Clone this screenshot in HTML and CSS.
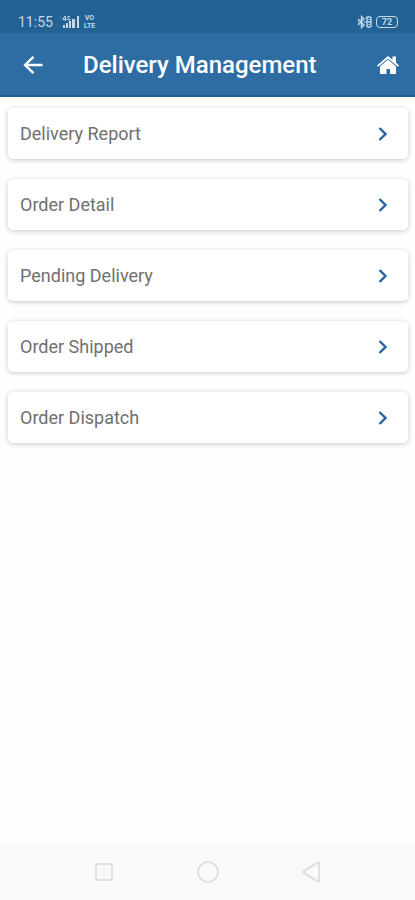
FILE: index.html
```
<!DOCTYPE html>
<html lang="en">
<head>
<meta charset="utf-8">
<meta name="viewport" content="width=device-width, initial-scale=1">
<title>Delivery Management</title>
<link rel="stylesheet" href="styles.css">
</head>
<body>
<div class="status-bar">
  <div class="status-group">
    <span class="time">11:55</span>
    <svg class="signal" width="23" height="14" viewBox="0 0 23 14" fill="currentColor" aria-hidden="true">
      <rect x="3" y="2" width="1" height="1" opacity=".5"/>
      <path d="M8 1L6 4.500H9.500M8.500 1V6M13 1.500H11V5H13V3.500" fill="none" stroke="currentColor" stroke-width="1"/>
      <rect x="6" y="10" width="2" height="3"/><rect x="9" y="8" width="2" height="5"/><rect x="12" y="6" width="2" height="7"/>
      <rect x="15" y="4" width="3" height="9"/><rect x="20" y="1" width="2" height="12"/>
    </svg>
    <span class="volte"><span>VO</span><span>LTE</span></span>
  </div>
  <div class="status-group">
    <svg width="15" height="14" viewBox="0 0 15 14" fill="none" stroke="currentColor" stroke-width="1.400" aria-hidden="true">
      <path d="M1 4L7 10L4.500 12.500V1.500L7 4L1 10"/>
      <path d="M1 7H2M7 7H8.500M9 2L10.500 3.500"/>
      <rect x="10" y="2" width="4" height="10" rx="1"/>
      <path d="M10 7H14M12 4V5M12 9V10"/>
    </svg>
    <span class="battery">72</span>
  </div>
</div>
<header class="app-bar">
  <button class="icon-button" type="button" aria-label="Back">
    <svg width="20" height="18" viewBox="0 0 20 18" fill="none" stroke="currentColor" stroke-width="2.400" aria-hidden="true"><path d="M19.500 9H2M10.500 .8L2 9L10.500 17.200"/></svg>
  </button>
  <h1>Delivery Management</h1>
  <a class="icon-button" href="#" aria-label="Home">
    <svg width="22" height="18" viewBox="0 0 22 18" fill="currentColor" aria-hidden="true">
      <path d="M11 3.600L19 10.400V17.200Q19 18 18.200 18H13V13H9.500V18H3.800Q3 18 3 17.200V10.400Z"/>
      <path d="M11 0L15.500 3.800V.5H19V6.700L22 9.400L20.900 10.700L11 2.600L1.100 10.700L0 9.400Z"/>
    </svg>
  </a>
</header>
<main>
  <nav class="menu" aria-label="Delivery">
    <a class="card" href="#"><span>Delivery Report</span><svg class="chevron" viewBox="0 0 10 14" aria-hidden="true"><path d="M1.500 1L7.500 7L1.500 13"/></svg></a>
    <a class="card" href="#"><span>Order Detail</span><svg class="chevron" viewBox="0 0 10 14" aria-hidden="true"><path d="M1.500 1L7.500 7L1.500 13"/></svg></a>
    <a class="card" href="#"><span>Pending Delivery</span><svg class="chevron" viewBox="0 0 10 14" aria-hidden="true"><path d="M1.500 1L7.500 7L1.500 13"/></svg></a>
    <a class="card" href="#"><span>Order Shipped</span><svg class="chevron" viewBox="0 0 10 14" aria-hidden="true"><path d="M1.500 1L7.500 7L1.500 13"/></svg></a>
    <a class="card" href="#"><span>Order Dispatch</span><svg class="chevron" viewBox="0 0 10 14" aria-hidden="true"><path d="M1.500 1L7.500 7L1.500 13"/></svg></a>
  </nav>
</main>
<footer class="system-nav">
  <button type="button" aria-label="Recent apps"><svg viewBox="0 0 22 22" aria-hidden="true"><rect x="3" y="3" width="16" height="16" rx="1"/></svg></button>
  <button type="button" aria-label="Home screen"><svg viewBox="0 0 22 22" aria-hidden="true"><circle cx="11" cy="11" r="10"/></svg></button>
  <button type="button" aria-label="System back"><svg viewBox="0 0 22 22" aria-hidden="true"><path d="M18 2V20Q18 21 17 20.500L3 12Q1.500 11 3 10L17 1.500Q18 1 18 2Z"/></svg></button>
</footer>
</body>
</html>
```
FILE: styles.css
```
* {
  box-sizing: border-box;
}

body {
  margin: 0;
  min-height: 100vh;
  display: flex;
  flex-direction: column;
  background: #fefefe;
  font-family: Roboto, "Liberation Sans", sans-serif;
}

button {
  padding: 0;
  border: 0;
  background: none;
  color: inherit;
}

.status-bar {
  display: flex;
  align-items: center;
  justify-content: space-between;
  height: 33px;
  padding: 10px 17px 0 18px;
  background: #226294;
  color: #c5d9e9;
}

.status-group {
  display: flex;
  align-items: center;
  gap: 4px;
}

.time {
  font-size: 14px;
  line-height: 16px;
}

.volte {
  display: flex;
  flex-direction: column;
  align-items: center;
  font-size: 7px;
  font-weight: 700;
  line-height: 8px;
}

.battery {
  width: 22px;
  height: 12px;
  border: 1px solid currentColor;
  border-radius: 4px;
  font-size: 9px;
  font-weight: 700;
  line-height: 10px;
  text-align: center;
}

.app-bar {
  display: flex;
  align-items: center;
  height: 64px;
  padding: 2px 16px 0 23px;
  background: #2e6da4;
  border-bottom: 2px solid #17608f;
  color: #fff;
}

.app-bar h1 {
  flex: 1;
  margin: 0 0 0 40px;
  font-size: 24px;
  font-weight: 500;
  line-height: 28px;
}

.icon-button {
  display: flex;
  color: #fff;
}

main {
  flex: 1;
  padding: 11px 7px 10px 8px;
}

.menu {
  display: flex;
  flex-direction: column;
  gap: 20px;
}

.card {
  display: flex;
  align-items: center;
  justify-content: space-between;
  height: 51px;
  padding: 0 20px 0 12px;
  border-radius: 5px;
  background: #fff;
  box-shadow: 0 1px 5px rgba(0, 0, 0, 0.22);
  color: #707070;
  font-size: 18px;
  line-height: 24px;
  text-decoration: none;
}

.chevron {
  width: 10px;
  height: 14px;
  fill: none;
  stroke: #2862a0;
  stroke-width: 2.4;
}

.system-nav {
  display: flex;
  align-items: center;
  justify-content: center;
  gap: 82px;
  height: 56px;
  background: #f9f9f9;
}

.system-nav button {
  display: flex;
}

.system-nav svg {
  width: 22px;
  height: 22px;
  fill: none;
  stroke: #d9d9d9;
  stroke-width: 1.5;
}
```
